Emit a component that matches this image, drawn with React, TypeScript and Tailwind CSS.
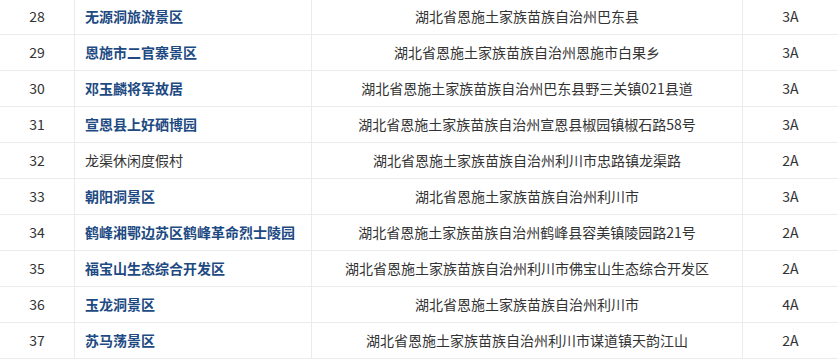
const rows = [
  { no: 28, name: "无源洞旅游景区", addr: "湖北省恩施土家族苗族自治州巴东县", level: "3A", bold: true },
  { no: 29, name: "恩施市二官寨景区", addr: "湖北省恩施土家族苗族自治州恩施市白果乡", level: "3A", bold: true },
  { no: 30, name: "邓玉麟将军故居", addr: "湖北省恩施土家族苗族自治州巴东县野三关镇021县道", level: "3A", bold: true },
  { no: 31, name: "宣恩县上好硒博园", addr: "湖北省恩施土家族苗族自治州宣恩县椒园镇椒石路58号", level: "3A", bold: true },
  { no: 32, name: "龙渠休闲度假村", addr: "湖北省恩施土家族苗族自治州利川市忠路镇龙渠路", level: "2A", bold: false },
  { no: 33, name: "朝阳洞景区", addr: "湖北省恩施土家族苗族自治州利川市", level: "3A", bold: true },
  { no: 34, name: "鹤峰湘鄂边苏区鹤峰革命烈士陵园", addr: "湖北省恩施土家族苗族自治州鹤峰县容美镇陵园路21号", level: "2A", bold: true },
  { no: 35, name: "福宝山生态综合开发区", addr: "湖北省恩施土家族苗族自治州利川市佛宝山生态综合开发区", level: "2A", bold: true },
  { no: 36, name: "玉龙洞景区", addr: "湖北省恩施土家族苗族自治州利川市", level: "4A", bold: true },
  { no: 37, name: "苏马荡景区", addr: "湖北省恩施土家族苗族自治州利川市谋道镇天韵江山", level: "2A", bold: true },
];

export default function App() {
  return (
    <div
      className="w-[838px] h-[359px] overflow-hidden bg-white text-[14px] text-[#333]"
      style={{ fontFamily: '"Noto Sans CJK SC", "Microsoft YaHei", sans-serif' }}
    >
      <div className="-mt-[1px]">
        {rows.map((r) => (
          <div key={r.no} className="flex h-[36px] border-b border-[#ebebeb]">
            <div className="w-[75px] shrink-0 border-r border-[#ebebeb] flex items-center justify-center">
              {r.no}
            </div>
            <div
              className={
                r.bold
                  ? "w-[237px] shrink-0 border-r border-[#ebebeb] flex items-center pl-[10px] font-bold text-[#1d4a82] whitespace-nowrap"
                  : "w-[237px] shrink-0 border-r border-[#ebebeb] flex items-center pl-[10px] whitespace-nowrap"
              }
            >
              {r.name}
            </div>
            <div className="w-[431px] shrink-0 border-r border-[#ebebeb] flex items-center justify-center whitespace-nowrap">
              {r.addr}
            </div>
            <div className="flex-1 flex items-center justify-center">{r.level}</div>
          </div>
        ))}
      </div>
    </div>
  );
}
